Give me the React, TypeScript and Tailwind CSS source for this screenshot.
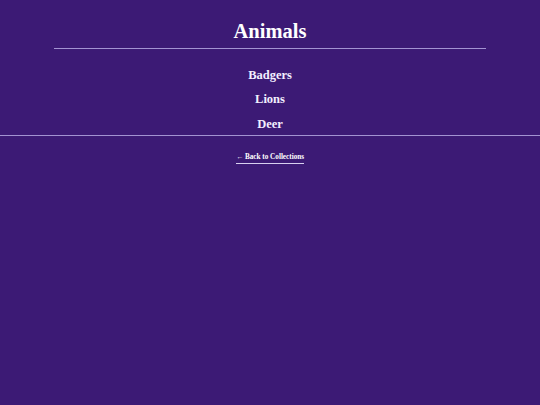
import React from "react";

export default function App() {
  const items = ["Badgers", "Lions", "Deer"];
  return (
    <div
      className="min-h-[405px] w-full bg-[#3c1a75] text-white"
      style={{ fontFamily: '"Liberation Serif", "DejaVu Serif", serif' }}
    >
      <h1 className="pt-[17px] text-center text-[20.5px] font-bold leading-[28px] mb-[3px]">Animals</h1>
      <div className="mx-auto w-4/5 border-t border-[#a393d2]" />
      <ul className="mt-[13.5px] mb-[-1.5px] flex flex-col items-center">
        {items.map((it) => (
          <li key={it} className="text-[12.5px] font-bold leading-[24.5px] text-[#f3efff]">
            {it}
          </li>
        ))}
      </ul>
      <div className="border-t border-[#a393d2]" />
      <div className="mt-[16.5px] flex justify-center">
        <a href="#" className="text-[7.2px] font-bold leading-[10px] border-b border-[#d8cff0] pb-[1px]">
          ← Back to Collections
        </a>
      </div>
    </div>
  );
}
